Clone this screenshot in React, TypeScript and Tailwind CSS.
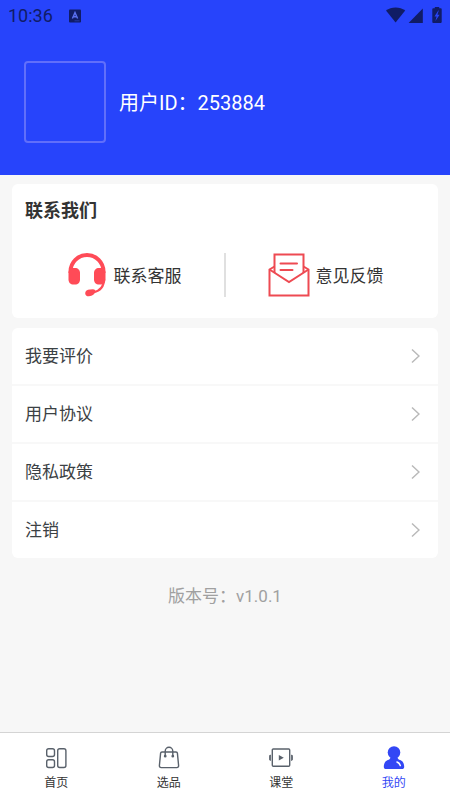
import React from "react";

const menuItems = ["我要评价", "用户协议", "隐私政策", "注销"];

function StatusBar() {
  return (
    <div className="flex h-8 items-center justify-between pl-2 pr-2 text-[#101c66]">
      <div className="flex items-center gap-4">
        <span className="text-lg leading-8">10:36</span>
        <svg className="h-[14px] w-3" viewBox="0 0 12 14" aria-hidden="true">
          <rect x="0" y="0.5" width="12" height="13" rx="1" fill="currentColor" />
          <path d="M3.4 9.5 6 3.6l2.6 5.9M4.4 7.7h3.2" fill="none" stroke="#5a70f0" strokeWidth="1.4" />
          <path d="M5.5 11.8h5" stroke="#2a3fb0" strokeWidth="0.8" />
        </svg>
      </div>
      <svg className="h-[18px] w-14" viewBox="0 0 56 18" fill="currentColor" aria-hidden="true">
        <path d="M0 3.600C5.400-.7 13.800-.7 19.200 3.600L9.600 15.400Z" />
        <path d="M36.800 1.600V16H22.600Z" />
        <path
          fillRule="evenodd"
          d="M48.800 0h4.400v1.200h1.600c.5 0 .9.4.9.9v13c0 .5-.4.9-.9.9h-7.600c-.5 0-.9-.4-.9-.9v-13c0-.5.4-.9.900-.9h1.600zM52.300 3.600 48.500 9.400h2.100l-1.200 4.600 4.200-6.200h-2.200l1.400-4.200z"
        />
      </svg>
    </div>
  );
}

function HeadsetIcon() {
  return (
    <svg className="h-11 w-[38px]" viewBox="0 0 38 44" fill="#ff4b57" aria-hidden="true">
      <path d="M2.500 20v-1.500a16.500 16.500 0 0 1 33 0V20" fill="none" stroke="#ff4b57" strokeWidth="4" />
      <path d="M36 26c0 7.500-4.500 12-10.500 13.300" fill="none" stroke="#ff4b57" strokeWidth="2.200" />
      <path d="M.5 20c0-3 2-5 5-5h1.500c3 0 5 2 5 5v6.500c0 3-2 5-5 5h-1.500c-3 0-5-2-5-5z" />
      <path d="M26 20c0-3 2-5 5-5h1.500c3 0 5 2 5 5v6.500c0 3-2 5-5 5h-1.500c-3 0-5-2-5-5z" />
      <path d="M22 36.500l3-.2c1.500 0 2.300.8 2.200 1.800-.3 3-2.700 5.200-6.200 5.200-2.600 0-3.800-1.100-3.800-3.100 0-2.300 1.900-3.700 4.800-3.700z" />
    </svg>
  );
}

function LetterIcon() {
  return (
    <svg className="h-11 w-[42px]" viewBox="0 0 42 44" fill="none" stroke="#ee4a52" strokeWidth="2" aria-hidden="true">
      <path d="M6.500 20V1.500h29V20" />
      <path d="M6.500 13.500 1.500 16.500V42.500h39V16.500L35.500 13.500" />
      <path d="M1.500 16.500 21 29 40.500 16.500" />
      <path d="M12.500 10.500h16.500M12.500 17h12" strokeLinecap="round" />
    </svg>
  );
}

function HomeIcon() {
  return (
    <svg className="size-6" viewBox="0 0 24 24" fill="none" stroke="#59616b" strokeWidth="1.400" aria-hidden="true">
      <rect x="2.700" y="2.700" width="7.800" height="7.800" rx="2" />
      <rect x="2.700" y="13.700" width="7.800" height="7.800" rx="2" />
      <rect x="13.700" y="2.700" width="8.200" height="18.800" rx="2" />
    </svg>
  );
}

function BagIcon() {
  return (
    <svg className="size-6" viewBox="0 0 24 24" fill="none" stroke="#59616b" strokeWidth="1.400" aria-hidden="true">
      <path d="M5 6h14c.8 0 1.300.4 1.400 1.200l1.200 12.300c.1 1.300-.6 2.100-1.800 2.100H4.200c-1.200 0-1.900-.8-1.800-2.100L3.600 7.200C3.700 6.400 4.200 6 5 6z" />
      <path d="M8.200 10V5.200a3.800 4 0 0 1 7.600 0V10" strokeLinecap="round" />
      <circle cx="8.200" cy="10.200" r="0.700" fill="#59616b" />
      <circle cx="15.800" cy="10.200" r="0.700" fill="#59616b" />
    </svg>
  );
}

function ClassIcon() {
  return (
    <svg className="size-6" viewBox="0 0 24 24" fill="none" stroke="#59616b" strokeWidth="1.400" aria-hidden="true">
      <rect x="3.300" y="3" width="17.400" height="17.200" rx="1" />
      <path d="M1.500 9v5.500c-1-.3-1.200-.8-1.200-1.600v-2.300c0-.8.2-1.300 1.200-1.600zM22.500 9v5.500c1-.3 1.200-.8 1.200-1.600v-2.300c0-.8-.2-1.300-1.200-1.600z" fill="#59616b" strokeWidth="0.800" />
      <path d="M9.800 9v5.400L14.800 11.700z" fill="#59616b" stroke="none" />
    </svg>
  );
}

function ProfileIcon() {
  return (
    <svg className="size-6" viewBox="0 0 24 24" fill="#3347f5" aria-hidden="true">
      <circle cx="12" cy="6.500" r="6.300" />
      <path d="M8.500 11.500h7c.5 1.600 1.200 2 2.700 2.600 2.800 1.100 4 3.700 4 6.600 0 1.600-.8 2.300-2.200 2.300H4c-1.400 0-2.200-.7-2.200-2.300 0-2.900 1.200-5.500 4-6.600 1.500-.6 2.200-1 2.700-2.600z" />
      <path d="M15 16c1.800.6 2.800 1.700 3.300 3.600" fill="none" stroke="#fff" strokeWidth="1.500" strokeLinecap="round" />
    </svg>
  );
}

const tabs = [
  { label: "首页", Icon: HomeIcon, active: false },
  { label: "选品", Icon: BagIcon, active: false },
  { label: "课堂", Icon: ClassIcon, active: false },
  { label: "我的", Icon: ProfileIcon, active: true },
];

export default function App() {
  return (
    <div className="flex min-h-screen flex-col bg-[#f7f7f7] font-[Roboto,'Noto_Sans_CJK_SC',sans-serif] text-[#333]">
      <header className="bg-[#2744fb] pb-8">
        <StatusBar />
        <div className="flex items-center gap-[13px] pl-6 pt-[29px] text-white">
          <div className="size-[82px] rounded border-2 border-[#616ffa]" />
          <span className="pt-0.5 text-xl leading-7">用户ID：253884</span>
        </div>
      </header>

      <main className="flex-1 px-3 pt-[9px]">
        <section className="h-[134px] rounded-md bg-white px-[13px] pt-[13px]">
          <h1 className="text-lg font-bold leading-7">联系我们</h1>
          <div className="mt-7 flex items-center">
            <button className="flex flex-1 items-center justify-center gap-2 text-[17px] leading-6">
              <HeadsetIcon />
              <span className="pt-0.5">联系客服</span>
            </button>
            <div className="h-11 w-0.5 bg-[#e0e0e0]" />
            <button className="flex flex-1 items-center justify-center gap-1.5 text-[17px] leading-6">
              <LetterIcon />
              <span className="pt-0.5">意见反馈</span>
            </button>
          </div>
        </section>

        <ul className="mt-[10px] divide-y-2 divide-[#f8f8f8] rounded-md bg-white">
          {menuItems.map((item) => (
            <li key={item}>
              <button className="flex h-14 w-full items-center justify-between pl-[13px] pr-[18px] text-[17px] leading-6 text-[#3b4144]">
                {item}
                <svg className="h-4 w-[9px]" viewBox="0 0 9 16" fill="none" stroke="#b9b9b9" strokeWidth="1.500" aria-hidden="true">
                  <path d="M1 1.500 8 8 1 14.500" />
                </svg>
              </button>
            </li>
          ))}
        </ul>

        <p className="mt-[26px] text-center text-[17px] leading-6 text-[#a0a0a0]">版本号：v1.0.1</p>
      </main>

      <nav className="flex h-[68px] border-t border-[#d4d4d4] bg-white">
        {tabs.map(({ label, Icon, active }) => (
          <a
            key={label}
            href="#"
            aria-current={active ? "page" : undefined}
            className={`flex flex-1 flex-col items-center gap-1 pt-[13px] text-xs leading-[18px] ${active ? "text-[#3347f5]" : "text-[#333]"}`}
          >
            <Icon />
            {label}
          </a>
        ))}
      </nav>
    </div>
  );
}
